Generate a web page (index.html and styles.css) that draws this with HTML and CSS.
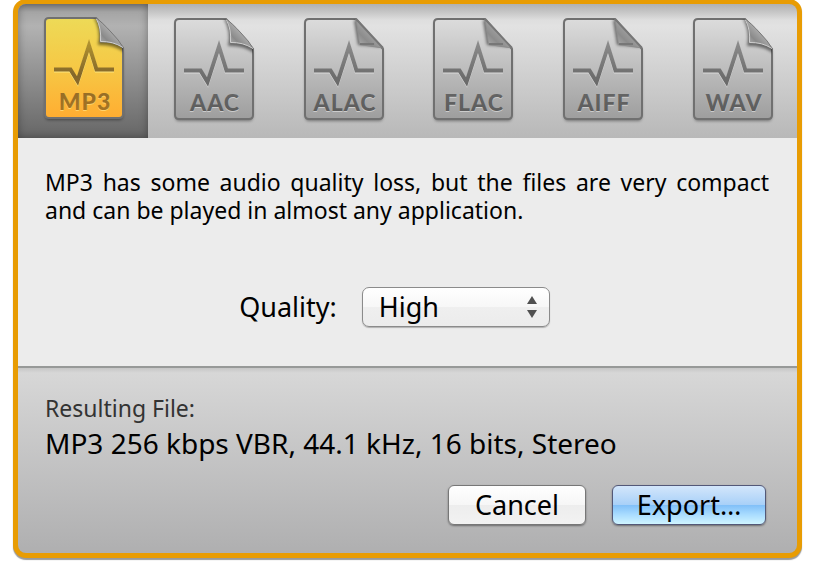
FILE: index.html
```html
<!DOCTYPE html>
<html lang="en">
<head>
<meta charset="utf-8">
<meta name="viewport" content="width=device-width, initial-scale=1">
<title>Export</title>
<link rel="stylesheet" href="styles.css">
</head>
<body>
<svg class="defs" aria-hidden="true">
  <defs>
    <linearGradient id="gold" x1="0" y1="0" x2="0" y2="1">
      <stop offset="0" stop-color="#edda57"/><stop offset=".5" stop-color="#f6c845"/><stop offset="1" stop-color="#ffad31"/>
    </linearGradient>
    <linearGradient id="silver" x1="0" y1="0" x2="0" y2="1">
      <stop offset="0" stop-color="#dcdcdc"/><stop offset="1" stop-color="#9e9e9e"/>
    </linearGradient>
    <linearGradient id="curl" gradientUnits="userSpaceOnUse" x1="55" y1="27" x2="67" y2="15">
      <stop offset="0" stop-color="#b4b4b4"/><stop offset=".5" stop-color="#8a8a8a"/><stop offset="1" stop-color="#a8a8a8"/>
    </linearGradient>
    <linearGradient id="crease-fill" gradientUnits="userSpaceOnUse" x1="55" y1="27" x2="67" y2="15">
      <stop offset="0" stop-color="#a8a8a8"/><stop offset=".5" stop-color="#8c8c8c"/><stop offset="1" stop-color="#a0a0a0"/>
    </linearGradient>
    <linearGradient id="gold-ink" gradientUnits="userSpaceOnUse" x1="0" y1="22" x2="0" y2="94">
      <stop offset="0" stop-color="#b6972f"/><stop offset=".5" stop-color="#84672a"/><stop offset="1" stop-color="#a87422"/>
    </linearGradient>
    <linearGradient id="silver-ink" gradientUnits="userSpaceOnUse" x1="0" y1="22" x2="0" y2="94">
      <stop offset="0" stop-color="#8e8e8e"/><stop offset=".5" stop-color="#6e6e6e"/><stop offset="1" stop-color="#5c5c5c"/>
    </linearGradient>
    <filter id="soft" x="-30%" y="-30%" width="160%" height="160%"><feGaussianBlur stdDeviation="1.5"/></filter>
    <clipPath id="page-clip"><path d="M5 1H52L79 31V97Q79 101 75 101H5Q1 101 1 97V5Q1 1 5 1Z"/></clipPath>
    <g id="page">
      <path class="page-shadow" d="M5 3H52L79 33V98Q79 103 75 103H5Q1 103 1 98V7Q1 3 5 3Z"/>
      <path class="page-body" d="M5 1H52L79 31V97Q79 101 75 101H5Q1 101 1 97V5Q1 1 5 1Z"/>
    </g>
    <g id="curled">
      <g clip-path="url(#page-clip)"><path class="fold-shadow" d="M50 1Q57 13 54 28Q69 27 80 35L80 31L52 1Z"/></g>
      <path class="fold" d="M52 1Q57.500 11 56 25Q69 24 79.500 31Q75 23 67 15Q58 5 52 1Z"/>
      <path class="fold-light" d="M52.500 2Q57.500 11 56.500 24.500Q69 24 79 30.500"/>
    </g>
    <g id="creased">
      <g clip-path="url(#page-clip)"><path class="fold-shadow" d="M50 3L54 27L78 29L52 1Z"/></g>
      <path class="fold creased" d="M52 1L55.500 26.500L79 30Z"/>
      <path class="crease" d="M56 26H70"/>
      <path class="crease" d="M52 1L79 30"/>
    </g>
    <path id="wave" d="M10 52.500H26.500L33.500 64L45 28.500L52.500 52.500H70"/>
  </defs>
</svg>

<main class="dialog">
  <div class="formats" role="tablist" aria-label="File format">
    <button class="format selected" type="button" role="tab" aria-selected="true">
      <svg class="icon" viewBox="-8 -8 96 118"><use href="#page"/><use href="#curled"/>
        <use class="wave-light" href="#wave" y="1"/><use class="wave" href="#wave"/>
        <text class="name-light" x="41" y="94">MP3</text><text class="name" x="41" y="93">MP3</text></svg>
    </button>
    <button class="format" type="button" role="tab" aria-selected="false">
      <svg class="icon" viewBox="-8 -8 96 118"><use href="#page"/><use href="#curled"/>
        <use class="wave-light" href="#wave" y="1"/><use class="wave" href="#wave"/>
        <text class="name-light" x="41" y="94">AAC</text><text class="name" x="41" y="93">AAC</text></svg>
    </button>
    <button class="format" type="button" role="tab" aria-selected="false">
      <svg class="icon" viewBox="-8 -8 96 118"><use href="#page"/><use href="#creased"/>
        <use class="wave-light" href="#wave" y="1"/><use class="wave" href="#wave"/>
        <text class="name-light" x="41" y="94">ALAC</text><text class="name" x="41" y="93">ALAC</text></svg>
    </button>
    <button class="format" type="button" role="tab" aria-selected="false">
      <svg class="icon" viewBox="-8 -8 96 118"><use href="#page"/><use href="#creased"/>
        <use class="wave-light" href="#wave" y="1"/><use class="wave" href="#wave"/>
        <text class="name-light" x="41" y="94">FLAC</text><text class="name" x="41" y="93">FLAC</text></svg>
    </button>
    <button class="format" type="button" role="tab" aria-selected="false">
      <svg class="icon" viewBox="-8 -8 96 118"><use href="#page"/><use href="#creased"/>
        <use class="wave-light" href="#wave" y="1"/><use class="wave" href="#wave"/>
        <text class="name-light" x="41" y="94">AIFF</text><text class="name" x="41" y="93">AIFF</text></svg>
    </button>
    <button class="format" type="button" role="tab" aria-selected="false">
      <svg class="icon" viewBox="-8 -8 96 118"><use href="#page"/><use href="#curled"/>
        <use class="wave-light" href="#wave" y="1"/><use class="wave" href="#wave"/>
        <text class="name-light" x="41" y="94">WAV</text><text class="name" x="41" y="93">WAV</text></svg>
    </button>
  </div>

  <section class="options">
    <p class="description">MP3 has some audio quality loss, but the files are very compact and can be played in almost any application.</p>
    <div class="field">
      <label for="quality">Quality:</label>
      <div class="popup">
        <select id="quality"><option>High</option></select>
        <svg class="arrows" viewBox="0 0 10 22" aria-hidden="true"><path d="M5 0L10 8H0ZM0 14H10L5 22Z"/></svg>
      </div>
    </div>
  </section>

  <footer class="result">
    <p class="caption">Resulting File:</p>
    <p class="summary">MP3 256 kbps VBR, 44.1 kHz, 16 bits, Stereo</p>
    <div class="actions">
      <button class="button" type="button">Cancel</button>
      <button class="button primary" type="button">Export…</button>
    </div>
  </footer>
</main>
</body>
</html>
```
FILE: styles.css
```css
* { box-sizing: border-box; }

body {
  margin: 0;
  padding: 0 14px 16px 13px;
  background: #fff;
  color: #000;
  font-family: "Lucida Grande", "Noto Sans", "Open Sans", sans-serif;
  font-size: 27px;
}

p { margin: 0; }

button, select { font: inherit; color: inherit; }

.defs { position: absolute; width: 0; height: 0; }

.dialog {
  margin-top: -1px;
  border: 5px solid #e89c03;
  border-radius: 13px;
  background: #e89c03;
  box-shadow: 0 2px 1px rgba(0, 0, 0, .4);
}

/* Format tabs */
.formats {
  display: grid;
  grid-template-columns: repeat(6, 1fr);
  overflow: hidden;
  border-radius: 8px 8px 0 0;
  background: linear-gradient(#b0b0b0, #c6c6c6 8px, #dedede 16px, #e2e2e2 22px, #b8b8b8);
}

.format {
  --paper: url(#silver);
  display: flex;
  justify-content: center;
  padding: 6px 0 10px 2px;
  border: 0;
  background: none;
}

.format.selected {
  --paper: url(#gold);
  padding: 5px 0 11px 2px;
  background: linear-gradient(#858585, #a5a5a5 8px, #b2b2b2 22px, #666);
  box-shadow: inset 0 0 8px rgba(0, 0, 0, .35);
}

.icon { display: block; width: 96px; height: 118px; }

.page-shadow { fill: #000; opacity: .4; filter: url(#soft); }
.page-body { fill: var(--paper); stroke: #707070; stroke-width: 2; }
.fold-shadow { fill: #000; opacity: .5; filter: url(#soft); }
.fold { fill: url(#curl); stroke: #777; stroke-width: 1; }
.fold.creased { fill: url(#crease-fill); stroke: #8c8c8c; }
.fold-light { fill: none; stroke: #d0d0d0; stroke-width: 1; }
.crease { fill: none; stroke: #777; stroke-width: 2; }
.wave, .wave-light { fill: none; stroke-width: 4; stroke-miterlimit: 8; }
.wave { stroke: url(#silver-ink); }
.wave-light { stroke: #dcdcdc; }
.name, .name-light {
  font-family: "Lato", sans-serif;
  font-size: 23px;
  font-weight: 900;
  letter-spacing: 1px;
  text-anchor: middle;
}
.name { fill: url(#silver-ink); }
.name-light { fill: #ccc; }

.selected .wave { stroke: url(#gold-ink); }
.selected .wave-light { stroke: #ffe780; }
.selected .name { fill: url(#gold-ink); }
.selected .name-light { fill: #ffd36b; }

/* Options */
.options {
  padding: 30px 28px 39px 27px;
  background: #ececec;
}

.description {
  font-size: 23px;
  line-height: 28px;
  text-align: justify;
}

.field {
  display: flex;
  justify-content: center;
  align-items: center;
  gap: 25px;
  padding-top: 63px;
  padding-right: 25px;
}

.field label { line-height: 40px; }

.popup { position: relative; width: 188px; }

.popup select {
  display: block;
  width: 100%;
  height: 40px;
  padding: 0 40px 2px 16px;
  border: 1px solid #8b8b8b;
  border-radius: 7px;
  appearance: none;
  background: linear-gradient(#fff, #f7f7f7 50%, #efefef 50%, #ececec);
  box-shadow: 0 1px 1px rgba(0, 0, 0, .25);
}

.arrows {
  position: absolute;
  top: 9px;
  right: 13px;
  width: 10px;
  height: 22px;
  fill: #505050;
  pointer-events: none;
}

/* Result */
.result {
  padding: 25px 31px 28px 27px;
  border-top: 2px solid #979998;
  border-radius: 0 0 8px 8px;
  background: linear-gradient(#c6c6c6, #d7d7d7 5px, #afafb0);
}

.caption { color: #333; font-size: 23px; line-height: 30px; }

.summary { font-size: 28px; line-height: 40px; }

.actions {
  display: flex;
  justify-content: flex-end;
  gap: 26px;
  padding-top: 22px;
}

.button {
  min-width: 138px;
  height: 40px;
  padding: 0 22px;
  border: 1px solid #777;
  border-radius: 6px;
  background: linear-gradient(#fff, #f6f6f6 50%, #ededed 50%, #f2f2f2);
  box-shadow: 0 1px 2px rgba(0, 0, 0, .4);
  line-height: 36px;
}

.button.primary {
  min-width: 154px;
  border-color: #535878;
  background: linear-gradient(#d3e6fb, #a8d0f8 50%, #80bff8 50%, #a9dcff 75%, #cff4ff);
}
```
